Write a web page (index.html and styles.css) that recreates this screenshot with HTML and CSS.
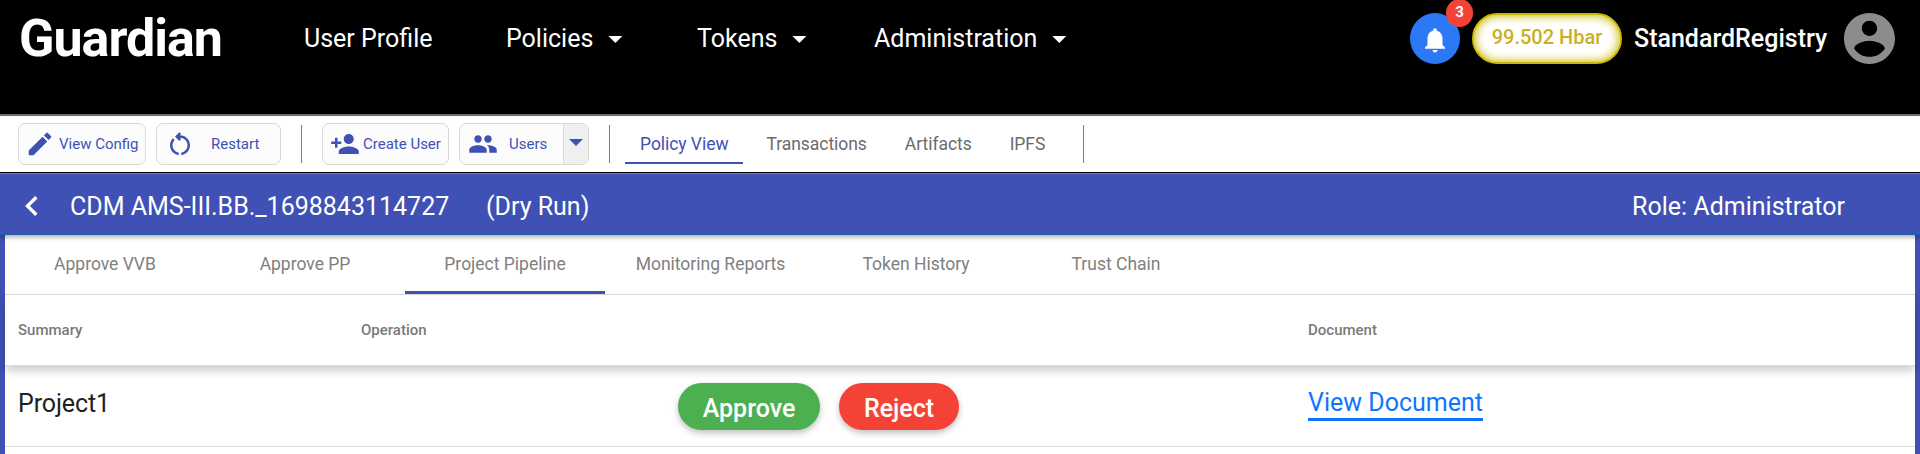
FILE: index.html
```html
<!DOCTYPE html>
<html lang="en">
<head>
<meta charset="utf-8">
<title>Guardian</title>
<link rel="stylesheet" href="styles.css">
</head>
<body>
<header class="topbar">
  <div class="logo">Guardian</div>
  <nav class="nav">
    <a class="nav-item nav-profile">User Profile</a>
    <a class="nav-item nav-policies">Policies<i class="caret"></i></a>
    <a class="nav-item nav-tokens">Tokens<i class="caret"></i></a>
    <a class="nav-item nav-admin">Administration<i class="caret"></i></a>
  </nav>
  <div class="account">
    <div class="bell">
      <svg width="30" height="30" viewBox="0 0 24 24"><path fill="#fff" d="M12 22c1.1 0 2-.9 2-2h-4c0 1.1.89 2 2 2zm6-6v-5c0-3.07-1.64-5.64-4.5-6.32V4c0-.83-.67-1.5-1.5-1.5s-1.5.67-1.5 1.5v.68C7.63 5.36 6 7.92 6 11v5l-2 2v1h16v-1l-2-2z"/></svg>
      <span class="badge">3</span>
    </div>
    <div class="balance">99.502 Hbar</div>
    <div class="username">StandardRegistry</div>
    <svg class="avatar" viewBox="2 2 20 20"><path fill="#8c8c8c" d="M12 2C6.48 2 2 6.48 2 12s4.48 10 10 10 10-4.48 10-10S17.52 2 12 2zm0 3c1.66 0 3 1.34 3 3s-1.34 3-3 3-3-1.34-3-3 1.34-3 3-3zm0 14.2c-2.5 0-4.71-1.28-6-3.22.03-1.99 4-3.08 6-3.08 1.99 0 5.97 1.09 6 3.08-1.29 1.94-3.5 3.22-6 3.22z"/></svg>
  </div>
</header>

<div class="toolbar">
  <button class="tool tool-config"><svg width="30" height="30" viewBox="0 0 24 24"><path d="M3 17.25V21h3.75L17.81 9.94l-3.75-3.75L3 17.25zM20.71 7.04c.39-.39.39-1.02 0-1.41l-2.34-2.34c-.39-.39-1.02-.39-1.41 0l-1.83 1.83 3.75 3.75 1.83-1.83z"/></svg><span class="tool-label">View Config</span></button>
  <button class="tool tool-restart"><svg width="30" height="30" viewBox="0 0 24 24"><path d="M6 13c0-1.65.67-3.15 1.76-4.24L6.34 7.34C4.9 8.79 4 10.79 4 13c0 4.08 3.05 7.44 7 7.93v-2.02c-2.83-.48-5-2.94-5-5.91zm14 0c0-4.42-3.58-8-8-8-.06 0-.12.01-.18.01l1.09-1.09L11.5 2.5 8 6l3.5 3.5 1.41-1.41-1.08-1.08c.06 0 .12-.01.17-.01 3.31 0 6 2.69 6 6 0 2.97-2.17 5.43-5 5.91v2.02c3.95-.49 7-3.85 7-7.93z"/></svg><span class="tool-label">Restart</span></button>
  <i class="divider divider-a"></i>
  <button class="tool tool-create"><svg width="30" height="30" viewBox="0 0 24 24"><path d="M15 12c2.21 0 4-1.79 4-4s-1.79-4-4-4-4 1.79-4 4 1.79 4 4 4zm-9-2V7H4v3H1v2h3v3h2v-3h3v-2H6zm9 4c-2.67 0-8 1.34-8 4v2h16v-2c0-2.66-5.33-4-8-4z"/></svg><span class="tool-label">Create User</span></button>
  <button class="tool tool-users"><svg width="30" height="30" viewBox="0 0 24 24"><path d="M16 11c1.66 0 2.99-1.34 2.99-3S17.66 5 16 5c-1.66 0-3 1.34-3 3s1.34 3 3 3zm-8 0c1.66 0 2.99-1.34 2.99-3S9.66 5 8 5C6.34 5 5 6.34 5 8s1.34 3 3 3zm0 2c-2.33 0-7 1.17-7 3.500V19h14v-2.500c0-2.330-4.670-3.500-7-3.500zm8 0c-.29 0-.62.02-.97.05 1.160.84 1.970 1.970 1.970 3.450V19h6v-2.500c0-2.330-4.670-3.500-7-3.500z"/></svg><span class="tool-label">Users</span><span class="drop"><i class="caret"></i></span></button>
  <i class="divider divider-b"></i>
  <div class="view-tabs">
    <a class="view-tab view-tab-active">Policy View</a>
    <a class="view-tab">Transactions</a>
    <a class="view-tab">Artifacts</a>
    <a class="view-tab">IPFS</a>
  </div>
  <i class="divider divider-c"></i>
</div>

<div class="policy-bar">
  <svg class="back" width="15" height="22" viewBox="0 0 15 22"><path d="M12.300 2.200 3.500 11l8.800 8.800" fill="none" stroke="#fff" stroke-width="3.400"/></svg>
  <div class="policy-name">CDM AMS-III.BB._1698843114727</div>
  <div class="policy-mode">(Dry Run)</div>
  <div class="policy-role">Role: Administrator</div>
</div>

<main class="panel">
  <nav class="tabs">
    <a class="tab">Approve VVB</a>
    <a class="tab">Approve PP</a>
    <a class="tab tab-active">Project Pipeline</a>
    <a class="tab tab-wide">Monitoring Reports</a>
    <a class="tab">Token History</a>
    <a class="tab">Trust Chain</a>
  </nav>
  <div class="row head">
    <div>Summary</div>
    <div>Operation</div>
    <div>Document</div>
  </div>
  <div class="row item">
    <div class="summary">Project1</div>
    <div class="actions">
      <button class="action approve">Approve</button>
      <button class="action reject">Reject</button>
    </div>
    <div class="document"><a class="doc-link">View Document</a></div>
  </div>
</main>
</body>
</html>
```
FILE: styles.css
```css
* { box-sizing: border-box; }

body {
  margin: 0;
  height: 454px;
  overflow: hidden;
  background: #fff;
  font-family: Roboto, sans-serif;
  white-space: nowrap;
}

button { font-family: inherit; white-space: nowrap; }

.caret {
  width: 14px;
  height: 7px;
  background: currentColor;
  clip-path: polygon(0 0, 100% 0, 50% 100%);
}

/* Top bar */
.topbar {
  display: flex;
  height: 116px;
  background: #000;
  border-bottom: 2px solid #6d6d6d;
  color: #fff;
}
.logo {
  width: 304px;
  padding: 8px 0 0 19px;
  font-size: 52px;
  line-height: 62px;
  font-weight: 700;
  letter-spacing: -1px;
}
.nav { display: flex; height: 77px; align-items: center; font-size: 25px; }
.nav-item { display: flex; align-items: center; gap: 15px; }
.nav-item .caret { margin-top: 2px; }
.nav-profile { width: 202px; }
.nav-policies { width: 191px; }
.nav-tokens { width: 177px; }
.account {
  display: flex;
  height: 77px;
  align-items: center;
  margin-left: auto;
  padding-right: 25px;
}
.bell {
  position: relative;
  display: flex;
  align-items: center;
  justify-content: center;
  width: 50px;
  height: 51px;
  padding-top: 2px;
  margin-right: 12px;
  border-radius: 50%;
  background: #2c78f6;
}
.badge {
  position: absolute;
  top: -14px;
  left: 36px;
  width: 27px;
  height: 28px;
  border-radius: 50%;
  background: #f44336;
  font-size: 15px;
  line-height: 27px;
  font-weight: 700;
  text-align: center;
}
.balance {
  width: 150px;
  height: 51px;
  margin-right: 12px;
  border: 2px solid #c8b900;
  border-radius: 26px;
  background: #fff;
  box-shadow: inset 0 0 10px 1px #c8b900;
  color: #c9b022;
  font-size: 20px;
  line-height: 45px;
  font-weight: 500;
  text-align: center;
}
.username { width: 210px; font-size: 25px; font-weight: 500; }
.avatar { width: 51px; height: 51px; }

/* Toolbar */
.toolbar {
  display: flex;
  align-items: flex-start;
  height: 58px;
  padding: 7px 0 0 18px;
  border-bottom: 1px solid #8a8a94;
  box-shadow: inset 0 -1px #000;
}
.tool {
  display: flex;
  align-items: center;
  height: 42px;
  padding: 0;
  border: 1px solid #d9d9d9;
  border-radius: 7px;
  background: #fcfcfc;
  color: #3f51b5;
  fill: #3f51b5;
  font-size: 15px;
  overflow: hidden;
}
.tool-label { margin-top: -1px; }
.tool-config { width: 128px; padding-left: 6px; margin-right: 10px; }
.tool-config .tool-label { padding-left: 4px; }
.tool-restart { width: 125px; padding-left: 8px; margin-right: 20px; }
.tool-restart .tool-label { padding-left: 16px; }
.tool-create { width: 127px; padding-left: 7px; margin-right: 10px; }
.tool-create .tool-label { padding-left: 3px; }
.tool-users { width: 130px; padding-left: 8px; margin-right: 20px; }
.tool-users .tool-label { padding-left: 11px; }
.drop {
  display: flex;
  align-items: center;
  justify-content: center;
  width: 25px;
  height: 42px;
  margin-left: auto;
  padding-bottom: 3px;
  border-left: 1px solid #d9d9d9;
  background: #efefef;
}
.divider { width: 1px; height: 38px; margin-top: 2px; background: #7c7c7c; }
.divider-a { margin-right: 20px; }
.divider-b { margin-right: 15px; }
.divider-c { margin-left: 23px; }
.view-tabs { display: flex; gap: 8px; font-size: 17.500px; color: #6b6b6b; letter-spacing: -.05px; }
.view-tab { height: 41px; padding: 0 15px; line-height: 43px; border-bottom: 2px solid transparent; }
.view-tab-active { color: #3f51b5; border-color: #3f51b5; }

/* Policy bar */
.policy-bar {
  position: relative;
  display: flex;
  align-items: center;
  height: 61px;
  padding: 4px 75px 0 24px;
  border-bottom: 1px solid #185fa5;
  background: #3f51b5;
  box-shadow: 0 2px 5px rgba(0, 0, 0, .35);
  color: #fff;
  font-size: 25px;
}
.back { margin-right: 31px; }
.policy-name { width: 416px; }
.policy-role { margin-left: auto; }

/* Policy panel */
.panel { height: 219px; border: solid #3f51b5; border-width: 0 5px; }
.tabs {
  display: flex;
  height: 60px;
  border-bottom: 1px solid #dcdcdc;
  color: #808080;
  font-size: 17.500px;
}
.tab { width: 200px; height: 59px; line-height: 58px; text-align: center; }
.tab-wide { width: 211px; }
.tab-active { border-bottom: 3px solid #3f51b5; }
.row { display: grid; grid-template-columns: 343px 947px 1fr; padding-left: 13px; }
.head {
  height: 71px;
  align-items: center;
  border-bottom: 1px solid #dcdcdc;
  box-shadow: 0 5px 9px rgba(0, 0, 0, .2);
  color: #7a7a7a;
  font-size: 15px;
  font-weight: 500;
}
.item { height: 81px; border-bottom: 1px solid #dcdcdc; font-size: 25px; color: #212121; }
.summary { padding-top: 23px; letter-spacing: -.1px; }
.document { padding-top: 22px; }
.actions { display: flex; gap: 19px; padding: 17px 0 0 317px; }
.action {
  height: 47px;
  padding: 3px 0 0;
  border: 0;
  border-radius: 24px;
  color: #fff;
  font-size: 25px;
  font-weight: 500;
  box-shadow: 0 3px 6px rgba(0, 0, 0, .25);
}
.approve { width: 142px; background: #4caf50; }
.reject { width: 120px; background: #f44336; }
.doc-link { display: inline-block; height: 32px; line-height: 28px; color: #0f75ff; border-bottom: 3px solid #0f75ff; }
```
